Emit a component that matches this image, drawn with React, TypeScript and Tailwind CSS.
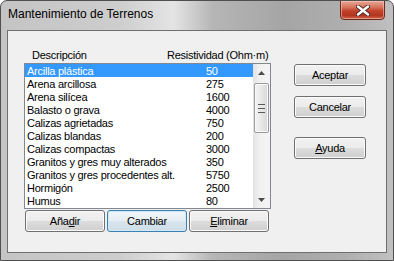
import React from "react";

const rows: [string, string][] = [
  ["Arcilla plástica", "50"],
  ["Arena arcillosa", "275"],
  ["Arena silícea", "1600"],
  ["Balasto o grava", "4000"],
  ["Calizas agrietadas", "750"],
  ["Calizas blandas", "200"],
  ["Calizas compactas", "3000"],
  ["Granitos y gres muy alterados", "350"],
  ["Granitos y gres procedentes alt.", "5750"],
  ["Hormigón", "2500"],
  ["Humus", "80"],
];

const font = { fontFamily: '"Liberation Sans", Arial, sans-serif' };

function Btn({
  children,
  w,
  active,
}: {
  children: React.ReactNode;
  w: string;
  active?: boolean;
}) {
  const base =
    "h-[22px] flex items-center justify-center rounded-[3px] border text-[11px] tracking-[-0.25px] text-black leading-[13px] ";
  const look = active
    ? "border-[#3c7fb1] shadow-[inset_0_0_0_1px_#cfe9f7] bg-[linear-gradient(to_bottom,#f0f5f8_0%,#e6eef3_50%,#d8e5ed_50%,#cddde8_100%)]"
    : "border-[#707070] shadow-[inset_0_0_0_1px_#fbfbfb] bg-[linear-gradient(to_bottom,#f2f2f2_0%,#ebebeb_50%,#dddddd_50%,#cfcfcf_100%)]";
  return <div className={base + look + " " + w}>{children}</div>;
}

export default function App() {
  return (
    <div
      className="w-[394px] h-[261px] rounded-t-[7px] border border-[#4f4f4f] bg-[linear-gradient(to_right,#c4c4c4_0%,#cdcdcd_30%,#e4e4e4_44%,#b6b6b6_54%,#a5a5a5_72%,#afafaf_88%,#c0c0c0_100%)] flex flex-col overflow-hidden"
      style={font}
    >
      {/* title bar */}
      <div className="h-[29px] flex items-start justify-between shrink-0">
        <div className="pl-[7px] pt-[6px] text-[12px] leading-[15px] text-black">
          Mantenimiento de Terrenos
        </div>
        <div className="mr-[8px] -mt-px w-[45px] h-[20px] rounded-b-[4px] border border-[#6a2a1c] bg-[linear-gradient(to_bottom,#e6a898_0%,#d6735c_35%,#c2412a_55%,#b2361f_80%,#d2674c_100%)] shadow-[inset_0_0_0_1px_rgba(255,210,200,0.5)] flex items-center justify-center">
          <svg width="14" height="11" viewBox="0 0 14 11">
            <path
              d="M2 1.5 L12 9.5 M12 1.5 L2 9.5"
              stroke="#4a2a22"
              strokeWidth="4.2"
              strokeLinecap="round"
            />
            <path
              d="M2 1.5 L12 9.5 M12 1.5 L2 9.5"
              stroke="#ffffff"
              strokeWidth="2.4"
              strokeLinecap="round"
            />
          </svg>
        </div>
      </div>

      {/* client area */}
      <div className="mx-[6px] h-[223px] border border-[#6f6f6f] bg-[#f0f0f0] flex shrink-0">
        {/* left column */}
        <div className="pl-[16px] pt-[17px] flex flex-col">
          <div className="h-[13px] flex text-[11px] leading-[15px] tracking-[-0.25px] text-black">
            <div className="pl-[8px] w-[143px]">Descripción</div>
            <div>Resistividad (Ohm·m)</div>
          </div>
          <div className="mt-[2px] w-[247px] h-[146px] border border-[#828790] bg-white flex">
            <div className="flex-1 flex flex-col">
              {rows.map(([d, v], i) => (
                <div
                  key={d}
                  className={
                    "h-[13px] flex pl-[2px] text-[11px] leading-[15px] tracking-[-0.25px] " +
                    (i === 0 ? "bg-[#3399ff] text-white" : "text-black")
                  }
                >
                  <div className="w-[179px] whitespace-nowrap">{d}</div>
                  <div>{v}</div>
                </div>
              ))}
            </div>
            <div className="w-[17px] bg-[linear-gradient(to_right,#e3e3e3,#f1f1f1_40%,#f4f4f4)] flex flex-col items-center">
              <div className="h-[17px] w-full flex items-center justify-center">
                <svg width="7" height="4" viewBox="0 0 7 4">
                  <path d="M0 4 L3.5 0 L7 4 Z" fill="#4d4d4d" />
                </svg>
              </div>
              <div className="mt-[2px] w-[15px] h-[50px] rounded-[2px] border border-[#9b9b9b] bg-[linear-gradient(to_right,#f3f3f3,#e8e8e8_50%,#d6d6d6)] shadow-[inset_0_0_0_1px_#fafafa] flex flex-col items-center justify-center gap-[1px]">
                <div className="w-[7px] h-[1px] bg-[#5a5a5a]" />
                <div className="w-[7px] h-[1px] bg-[#e8e8e8]" />
                <div className="w-[7px] h-[1px] bg-[#5a5a5a]" />
                <div className="w-[7px] h-[1px] bg-[#e8e8e8]" />
                <div className="w-[7px] h-[1px] bg-[#5a5a5a]" />
              </div>
              <div className="flex-1" />
              <div className="h-[17px] w-full flex items-center justify-center">
                <svg width="7" height="4" viewBox="0 0 7 4">
                  <path d="M0 0 L3.5 4 L7 0 Z" fill="#4d4d4d" />
                </svg>
              </div>
            </div>
          </div>
          <div className="mt-[1px] pl-[1px] flex gap-[2px]">
            <Btn w="w-[80px]">
              <span>
                Aña<span className="underline">d</span>ir
              </span>
            </Btn>
            <Btn w="w-[80px]" active>
              Cambiar
            </Btn>
            <Btn w="w-[80px]">
              <span>
                <span className="underline">E</span>liminar
              </span>
            </Btn>
          </div>
        </div>

        {/* right column */}
        <div className="ml-[23px] pt-[33px] flex flex-col">
          <Btn w="w-[72px]">Aceptar</Btn>
          <div className="h-[10px]" />
          <Btn w="w-[72px]">Cancelar</Btn>
          <div className="h-[19px]" />
          <Btn w="w-[72px]">
            <span>
              <span className="underline">A</span>yuda
            </span>
          </Btn>
        </div>
      </div>
    </div>
  );
}
